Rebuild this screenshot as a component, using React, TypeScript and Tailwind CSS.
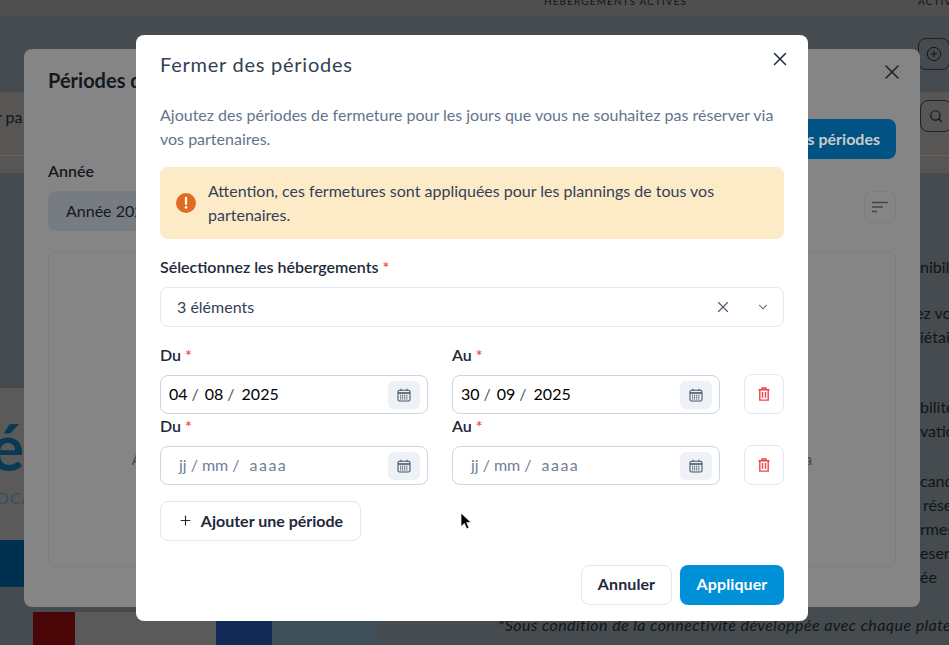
import { ChevronDown, CirclePlus, Plus, Search, X } from 'lucide-react';

const font = { fontFamily: 'Lato, "Noto Sans", sans-serif' };

function RequiredLabel({ text }: { text: string }) {
  return (
    <div className="text-[16px] leading-[24px] font-semibold text-[#1e293b]">
      {text} <span className="text-[#ef4444]">*</span>
    </div>
  );
}

function CalendarIcon() {
  return (
    <svg width="14" height="14" viewBox="0 0 14 14" fill="none" stroke="#475569" strokeWidth="1.1">
      <rect x="1" y="2.2" width="12" height="10.8" rx="1.6" />
      <path d="M1 5h12" strokeWidth="1.6" />
      <path d="M4 .8v2M10 .8v2" />
      <path d="M3 7.2h8M3 9.1h8M3 11h8" strokeDasharray="1.1 .8" />
    </svg>
  );
}

function TrashIcon() {
  return (
    <svg width="14" height="14" viewBox="0 0 14 14" fill="none" stroke="#ef4444" strokeWidth="1.4">
      <path d="M1.5 2.7h11M5 2.5V1h4v1.5" />
      <path d="M2.8 2.7v10.4h8.4V2.7" />
      <path d="M5.5 5v5.8M8.5 5v5.8" />
    </svg>
  );
}

function DateField({ value }: { value?: string[] }) {
  return (
    <div className="flex h-[39px] items-center justify-between rounded-lg border border-[#cbd5e1] pr-[7px]">
      {value ? (
        <span className="-mt-px flex pl-2 text-[16px] text-black">
          <span>{value[0]}</span>
          <span className="ml-1 text-[#475569]">/</span>
          <span className="ml-[6px]">{value[1]}</span>
          <span className="ml-1 text-[#475569]">/</span>
          <span className="ml-[7px]">{value[2]}</span>
        </span>
      ) : (
        <span className="-mt-px flex pl-[18px] text-[16px] text-[#71809a]">
          <span>jj</span>
          <span className="ml-1">/</span>
          <span className="ml-1">mm</span>
          <span className="ml-1">/</span>
          <span className="ml-[10px] tracking-[1.5px]">aaaa</span>
        </span>
      )}
      <span className="flex h-7 w-8 items-center justify-center rounded-md bg-[#eef2f6]">
        <CalendarIcon />
      </span>
    </div>
  );
}

function PeriodRow({ from, to }: { from?: string[]; to?: string[] }) {
  return (
    <div className="grid grid-cols-[268px_268px_40px] gap-x-6">
      <RequiredLabel text="Du" />
      <RequiredLabel text="Au" />
      <span />
      <div className="mt-2">
        <DateField value={from} />
      </div>
      <div className="mt-2">
        <DateField value={to} />
      </div>
      <button className="mt-[7px] flex h-10 w-10 items-center justify-center rounded-lg border border-[#e2e8f0]">
        <TrashIcon />
      </button>
    </div>
  );
}

function PageBehind() {
  return (
    <div className="flex h-[645px] flex-col bg-[#454b4e] text-[#111518]">
      <div className="flex h-4 items-start overflow-hidden whitespace-nowrap bg-[#504f4f] text-[10px] leading-[2px] tracking-[1.1px]">
        <span className="ml-[544px] shrink-0">HÉBERGEMENTS ACTIVÉS</span>
        <span className="ml-[231px] shrink-0">ACTIV</span>
      </div>
      <div className="flex h-[76px] items-start justify-end">
        <span className="mt-[22px] -mr-[1px] flex h-8 w-8 items-center justify-center rounded-lg border border-[#1d2125]">
          <CirclePlus size={16} strokeWidth={1.5} />
        </span>
      </div>
      <div className="flex h-[81px] flex-col bg-[#585654]">
        <div className="flex h-[64px] items-start justify-between border-b border-[#66645f] text-[16px]">
          <span className="-ml-1 mt-[13px]">r pa</span>
          <span className="mt-[8px] -mr-[3px] flex h-8 w-8 items-center justify-center rounded-lg border border-[#1d2125]">
            <Search size={14} />
          </span>
        </div>
      </div>
      <div className="relative flex min-h-0 flex-1">
        <div className="w-[140px] shrink-0 pt-[215px]">
          <div className="h-[152px] w-full overflow-hidden bg-[#5a5a5a] pt-[23px]">
            <div className="-ml-[10px] text-[64px] leading-[72px] font-bold text-[#0b3954]">é</div>
            <div className="mt-[5px] -ml-[4px] text-[16px] leading-[20px] tracking-[1px] text-[#35505f]">OCA</div>
          </div>
          <div className="h-[47px] w-full bg-[#00304f]" />
        </div>
        <div className="ml-auto w-[29px] shrink-0 overflow-hidden whitespace-nowrap pt-[82px] text-[16px] leading-6">
          <div>nibil</div>
          <div className="mt-[22px] -ml-[5px]">ez vo</div>
          <div>iétai</div>
          <div className="mt-[46px]">bilité</div>
          <div>vatio</div>
          <div className="mt-[26px]">cand</div>
          <div className="ml-[3px]">rése</div>
          <div>rmes</div>
          <div>eserv</div>
          <div>ée</div>
        </div>
        <div className="absolute bottom-0 left-[33px] flex h-[33px] w-[345px]">
          <div className="w-[42px] bg-[#4a0606]" />
          <div className="w-[141px] bg-[#5a5a5a]" />
          <div className="w-[56px] bg-[#112a56]" />
          <div className="flex-1 bg-[#3f4f58]" />
        </div>
        <div className="absolute bottom-[8px] left-[498px] whitespace-nowrap text-[16px] italic leading-6 tracking-[0.43px]">
          *Sous condition de la connectivité développée avec chaque plateforme
        </div>
      </div>
    </div>
  );
}

function PeriodsDialog() {
  return (
    <div className="absolute left-6 top-[49px] flex h-[558px] w-[896px] flex-col rounded-lg bg-[#858585] px-6 pt-[23px] pb-10 text-[#14181f]">
      <div className="flex items-start justify-between">
        <h2 className="text-[20px] leading-[16px] font-bold">Périodes de fermeture</h2>
        <X size={24} strokeWidth={1.5} className="-mr-[8px] -mt-[12px] text-[#1c2027]" />
      </div>
      <div className="mt-[31px] flex justify-end">
        <button className="h-10 rounded-lg bg-[#005382] px-4 text-[16px] font-bold text-[#c9ccce]">
          Fermer des périodes
        </button>
      </div>
      <div className="text-[16px] leading-6 font-semibold">Année</div>
      <div className="mt-2 flex items-start justify-between">
        <div className="flex h-10 w-[300px] items-center rounded-lg bg-[#777c82] px-[18px] text-[16px]">
          Année 2025
        </div>
        <span className="flex h-8 w-8 items-center justify-center rounded-lg border border-[#7a7e84]">
          <svg width="16" height="12" viewBox="0 0 16 12" fill="none" stroke="#41464d" strokeWidth="1.3">
            <path d="M0 1.5h16M0 6h11M0 10.5h5" />
          </svg>
        </span>
      </div>
      <div className="mt-5 flex min-h-0 flex-1 items-center justify-center rounded-lg border border-[#7a7e84] pt-[100px] text-[16px] tracking-[0.2px] text-[#454c59]">
        Aucune période de fermeture n'a été ajoutée pour le moment, commencez à en créer une ici, la
      </div>
    </div>
  );
}

export default function App() {
  return (
    <div className="relative h-[645px] w-[949px] overflow-hidden" style={font}>
      <PageBehind />
      <PeriodsDialog />

      <div className="absolute left-[136px] top-[35px] flex h-[586px] w-[672px] flex-col rounded-lg bg-white px-6 pt-[18px]">
        <div className="flex items-start justify-between">
          <h1 className="-mt-px text-[20px] leading-6 font-normal tracking-[0.75px] text-[#334155]">Fermer des périodes</h1>
          <X size={22} strokeWidth={1.6} className="-mr-[7px] -mt-[5px] text-[#1e293b]" />
        </div>
        <p className="mt-[27px] text-[16px] leading-6 text-[#64748b]">
          Ajoutez des périodes de fermeture pour les jours que vous ne souhaitez pas réserver via vos partenaires.
        </p>
        <div className="mt-[16px] flex items-center gap-3 rounded-lg bg-[#fdebc8] px-4 py-3 text-[16px] leading-6 text-[#334155]">
          <svg width="20" height="20" viewBox="0 0 20 20" className="shrink-0">
            <circle cx="10" cy="10" r="10" fill="#e26b1f" />
            <path d="M10 4.8v6.2" stroke="#fff" strokeWidth="2.2" strokeLinecap="round" />
            <circle cx="10" cy="14.4" r="1.3" fill="#fff" />
          </svg>
          <span>Attention, ces fermetures sont appliquées pour les plannings de tous vos partenaires.</span>
        </div>
        <div className="mt-4">
          <RequiredLabel text="Sélectionnez les hébergements" />
        </div>
        <div className="mt-2 flex h-10 items-center justify-between rounded-lg border border-[#e2e8f0] pl-4 pr-[13px] text-[16px] text-[#334155]">
          <span>3 éléments</span>
          <span className="flex items-center gap-[24px] text-[#475569]">
            <X size={18} strokeWidth={1.5} />
            <ChevronDown size={14} strokeWidth={1.8} />
          </span>
        </div>
        <div className="mt-4 flex flex-col gap-0">
          <PeriodRow from={['04', '08', '2025']} to={['30', '09', '2025']} />
          <PeriodRow />
        </div>
        <button className="mt-4 flex h-10 w-[201px] items-center justify-center gap-2 rounded-lg border border-[#e2e8f0] pb-px text-[16px] font-bold text-[#1e293b]">
          <Plus size={15} strokeWidth={1.8} />
          Ajouter une période
        </button>
        <div className="mt-6 flex justify-end gap-2">
          <button className="h-10 w-[91px] rounded-lg border border-[#e2e8f0] pb-[2px] text-[16px] font-bold tracking-[0.1px] text-[#1e293b]">
            Annuler
          </button>
          <button className="h-10 w-[104px] rounded-lg bg-[#0090d7] pb-[2px] text-[16px] font-bold tracking-[0.1px] text-white">
            Appliquer
          </button>
        </div>
      </div>

      <svg className="absolute left-[460px] top-[512px]" width="13" height="19" viewBox="0 0 13 19">
        <path d="M1 1v13.5l3.4-3 2.3 5.3 2.3-1-2.3-5.2h4.4z" fill="#000" stroke="#fff" strokeWidth=".7" />
      </svg>
    </div>
  );
}
